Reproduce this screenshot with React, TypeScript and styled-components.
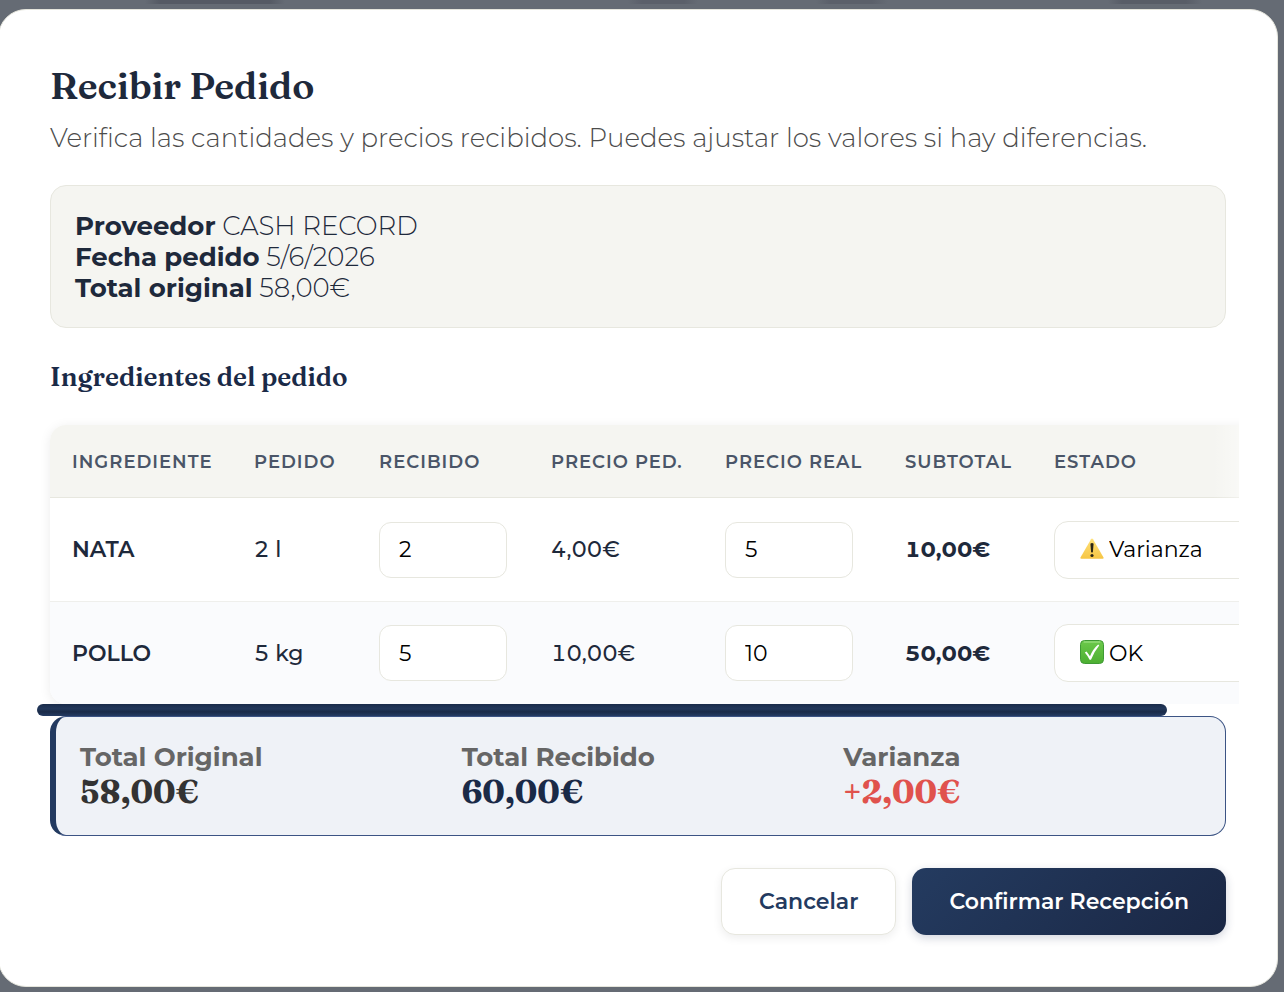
import React, { useState } from "react";
import styled, { createGlobalStyle } from "styled-components";

const sans = `Montserrat, Inter, "Open Sans", sans-serif`;
const serif = `Fraunces, "Liberation Serif", serif`;

const GlobalStyle = createGlobalStyle`
  *, *::before, *::after { box-sizing: border-box; }
  body { margin: 0; background: #656b74; font-family: ${sans}; color: #1e293b; }
`;

const Backdrop = styled.div`
  display: flex;
  min-height: 100vh;
  padding: 9px 6px 5px 0;
  overflow: hidden;
  background:
    linear-gradient(90deg, transparent 145px, #555a64 160px, #555a64 270px, transparent 285px,
      transparent 628px, #5b606a 642px, #5b606a 684px, transparent 698px,
      transparent 816px, #5b606a 830px, #5b606a 872px, transparent 888px,
      transparent 1108px, #585d67 1122px, #585d67 1186px, transparent 1202px) 0 0 / 100% 4px no-repeat,
    #656b74;
`;

const Dialog = styled.section`
  flex: 1;
  min-width: 0;
  margin-left: -2px;
  padding: 52px 51px 50px;
  background: #fff;
  border: 1px solid #e5e5dc;
  border-radius: 28px;
`;

const Title = styled.h2`
  margin: 0 0 12px;
  font: 600 37px/48px ${serif};
`;

const Intro = styled.p`
  margin: 0 0 30px;
  font-size: 26px;
  font-weight: 300;
  line-height: 33px;
  color: #4c4c4c;
`;

const OrderInfo = styled.div`
  margin-bottom: 31px;
  padding: 25px 24px 23px;
  background: #f5f5f1;
  border: 1px solid #e7e7df;
  border-radius: 16px;
  font-size: 26px;
  font-weight: 300;
  line-height: 31px;
`;

const InfoLine = styled.div`
  strong { font-weight: 700; }
`;

const Subtitle = styled.h3`
  margin: 0 0 18px;
  font: 600 26px/36px ${serif};
  color: #1a2a47;
`;

const TableFrame = styled.div`
  position: relative;
  margin: 0 -13px;

  &::after {
    content: "";
    position: absolute;
    inset: 12px 0 218px auto;
    width: 26px;
    background: linear-gradient(90deg, transparent, rgba(255, 255, 255, 0.4));
    pointer-events: none;
  }
`;

const TableScroll = styled.div`
  overflow-x: auto;
  overflow-y: hidden;
  padding: 12px 13px 0;
  scrollbar-width: none;
`;

const ScrollThumb = styled.div`
  width: 94%;
  height: 12px;
  border-radius: 6px;
  background: linear-gradient(#1a2b4a, #22375a 40%, #1a2b48 65%, #243b63);
`;

const Table = styled.table`
  width: 1270px;
  table-layout: fixed;
  border-collapse: separate;
  border-spacing: 0;
  border-radius: 16px;
  overflow: hidden;
  background: #fff;
  box-shadow: 0 2px 12px rgba(0, 0, 0, 0.08);
  font-variant-numeric: tabular-nums;
`;

const Col = styled.col<{ $width?: number }>`
  width: ${(p) => (p.$width ? `${p.$width}px` : "auto")};
`;

const HeadCell = styled.th`
  height: 73px;
  padding: 2px 22px 0;
  background: #f5f5f1;
  border-bottom: 1px solid #e7e7df;
  font-size: 18px;
  font-weight: 600;
  letter-spacing: 1px;
  text-align: left;
  text-transform: uppercase;
  white-space: nowrap;
  color: #4a5568;
`;

const Row = styled.tr`
  &:nth-child(even) { background: #fafbfd; }
  &:not(:last-child) td { height: 104px; border-bottom: 1px solid #efefec; }
`;

const Cell = styled.td<{ $weight?: number }>`
  height: 102px;
  padding: 0 22px;
  font-size: 22px;
  font-weight: ${(p) => p.$weight ?? 500};
  white-space: nowrap;
`;

const NumberInput = styled.input`
  display: block;
  width: 128px;
  height: 56px;
  padding: 0 19px;
  border: 1px solid #e7e7df;
  border-radius: 12px;
  background: #fff;
  font: 400 22px ${sans};
  color: #000;
`;

const StatusField = styled.div`
  position: relative;

  svg {
    position: absolute;
    left: 26px;
    top: 16px;
    pointer-events: none;
  }
`;

const StatusSelect = styled.select`
  display: block;
  width: 100%;
  height: 58px;
  padding: 0 24px 0 54px;
  appearance: none;
  border: 1px solid #e7e7df;
  border-radius: 14px;
  background: #fff;
  font: 400 22px ${sans};
  color: #000;
`;

const Summary = styled.div`
  display: grid;
  grid-template-columns: repeat(3, 1fr);
  column-gap: 24px;
  margin-bottom: 32px;
  padding: 24px 24px 26px;
  background: #eff2f7;
  border: 1px solid #3c5484;
  border-left: 6px solid #233a60;
  border-radius: 16px;
`;

const SummaryLabel = styled.div`
  font-size: 26px;
  font-weight: 700;
  line-height: 33px;
  color: #666;
`;

const SummaryValue = styled.div<{ $color: string }>`
  font: 700 32px/35px ${serif};
  color: ${(p) => p.$color};
`;

const Actions = styled.div`
  display: flex;
  justify-content: flex-end;
  gap: 16px;
`;

const Button = styled.button<{ $primary?: boolean }>`
  height: 67px;
  padding: 0 37px;
  border: ${(p) => (p.$primary ? "0" : "1px solid #e7e7df")};
  border-radius: 14px;
  background: ${(p) => (p.$primary ? "linear-gradient(135deg, #243b60, #1a2744)" : "#fff")};
  color: ${(p) => (p.$primary ? "#fff" : "#233a60")};
  box-shadow: 0 3px 10px ${(p) => (p.$primary ? "rgba(30, 41, 80, 0.2)" : "rgba(0, 0, 0, 0.07)")};
  font: 600 22px ${sans};
  cursor: pointer;
`;

const WarningIcon = () => (
  <svg width="24" height="24" viewBox="0 0 24 24" aria-hidden="true">
    <defs>
      <linearGradient id="warn" x1="0" y1="0" x2="0" y2="1">
        <stop offset="0" stopColor="#ffe27a" />
        <stop offset="1" stopColor="#f6c544" />
      </linearGradient>
    </defs>
    <path d="M11 2.2Q12 .8 13 2.2L23.4 20.2Q24.2 21.8 22.6 21.8H1.4Q-.2 21.8 .6 20.2Z" fill="url(#warn)" />
    <path d="M10.4 6.8Q12 5.4 13.6 6.8L12.9 15Q12 16 11.1 15Z" fill="#2b2616" />
    <circle cx="12" cy="18.5" r="1.6" fill="#2b2616" />
  </svg>
);

const CheckIcon = () => (
  <svg width="24" height="24" viewBox="0 0 24 24" aria-hidden="true">
    <defs>
      <linearGradient id="check" x1="0" y1="0" x2="0" y2="1">
        <stop offset="0" stopColor="#6cc94b" />
        <stop offset="1" stopColor="#4caf31" />
      </linearGradient>
    </defs>
    <rect x=".5" y=".5" width="23" height="23" rx="4" fill="url(#check)" stroke="#3f9a35" />
    <path d="M4 2H20" stroke="#a5e58e" strokeLinecap="round" />
    <path d="M4.8 12.6L6.6 11.6L10 16.2Q13 9 18.2 4.6L19.2 5.4Q14 11.6 11 19.8H9.6Q7.4 15.6 4.8 12.6Z" fill="#fff" />
  </svg>
);

type Status = "varianza" | "ok";

const items: { name: string; ordered: string; received: string; price: string; real: string; subtotal: string; status: Status }[] = [
  { name: "NATA", ordered: "2 l", received: "2", price: "4,00€", real: "5", subtotal: "10,00€", status: "varianza" },
  { name: "POLLO", ordered: "5 kg", received: "5", price: "10,00€", real: "10", subtotal: "50,00€", status: "ok" },
];

const columns = [
  { label: "Ingrediente", width: 182 },
  { label: "Pedido", width: 125 },
  { label: "Recibido", width: 172 },
  { label: "Precio ped.", width: 174 },
  { label: "Precio real", width: 180 },
  { label: "Subtotal", width: 149 },
  { label: "Estado" },
];

const totals = [
  { label: "Total Original", value: "58,00€", color: "#333" },
  { label: "Total Recibido", value: "60,00€", color: "#1a2a47" },
  { label: "Varianza", value: "+2,00€", color: "#e0524d" },
];

function StatusPicker({ initial, label }: { initial: Status; label: string }) {
  const [status, setStatus] = useState<Status>(initial);
  return (
    <StatusField>
      <StatusSelect aria-label={label} value={status} onChange={(e) => setStatus(e.target.value as Status)}>
        <option value="ok">OK</option>
        <option value="varianza">Varianza</option>
      </StatusSelect>
      {status === "ok" ? <CheckIcon /> : <WarningIcon />}
    </StatusField>
  );
}

export default function App() {
  return (
    <>
      <GlobalStyle />
      <Backdrop>
        <Dialog role="dialog" aria-labelledby="dialog-title">
          <Title id="dialog-title">Recibir Pedido</Title>
          <Intro>Verifica las cantidades y precios recibidos. Puedes ajustar los valores si hay diferencias.</Intro>
          <OrderInfo>
            <InfoLine><strong>Proveedor</strong> CASH RECORD</InfoLine>
            <InfoLine><strong>Fecha pedido</strong> 5/6/2026</InfoLine>
            <InfoLine><strong>Total original</strong> 58,00€</InfoLine>
          </OrderInfo>
          <Subtitle>Ingredientes del pedido</Subtitle>
          <TableFrame>
            <TableScroll>
              <Table>
                <colgroup>
                  {columns.map((c) => <Col key={c.label} $width={c.width} />)}
                </colgroup>
                <thead>
                  <tr>{columns.map((c) => <HeadCell key={c.label} scope="col">{c.label}</HeadCell>)}</tr>
                </thead>
                <tbody>
                  {items.map((item) => (
                    <Row key={item.name}>
                      <Cell $weight={600}>{item.name}</Cell>
                      <Cell>{item.ordered}</Cell>
                      <Cell><NumberInput aria-label={`Recibido ${item.name}`} defaultValue={item.received} inputMode="decimal" /></Cell>
                      <Cell>{item.price}</Cell>
                      <Cell><NumberInput aria-label={`Precio real ${item.name}`} defaultValue={item.real} inputMode="decimal" /></Cell>
                      <Cell $weight={700}>{item.subtotal}</Cell>
                      <Cell><StatusPicker initial={item.status} label={`Estado ${item.name}`} /></Cell>
                    </Row>
                  ))}
                </tbody>
              </Table>
            </TableScroll>
            <ScrollThumb />
          </TableFrame>
          <Summary>
            {totals.map((t) => (
              <div key={t.label}>
                <SummaryLabel>{t.label}</SummaryLabel>
                <SummaryValue $color={t.color}>{t.value}</SummaryValue>
              </div>
            ))}
          </Summary>
          <Actions>
            <Button type="button">Cancelar</Button>
            <Button type="button" $primary>Confirmar Recepción</Button>
          </Actions>
        </Dialog>
      </Backdrop>
    </>
  );
}
